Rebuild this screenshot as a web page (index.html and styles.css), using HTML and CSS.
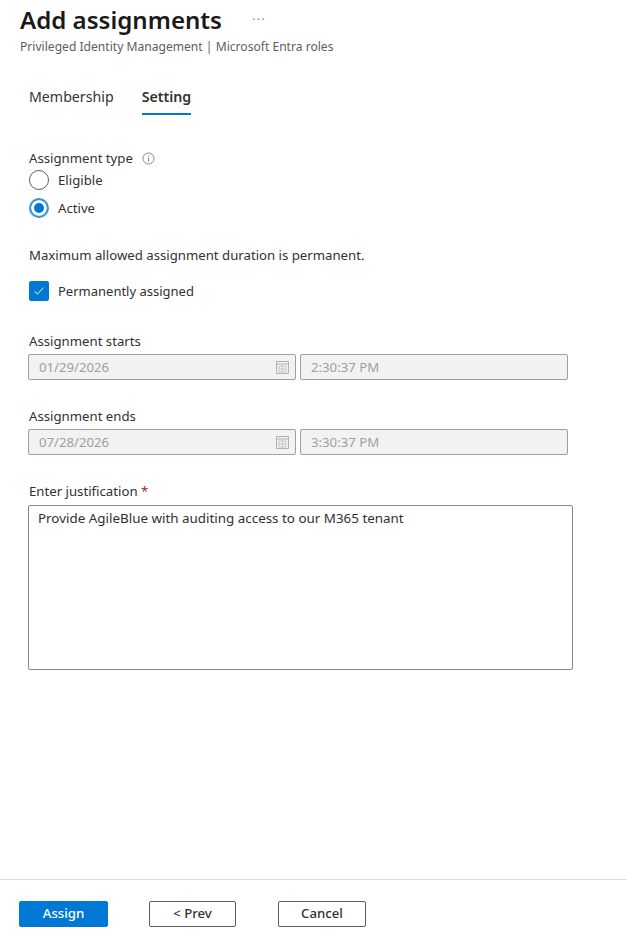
FILE: index.html
```html
<!DOCTYPE html>
<html lang="en">
<head>
<meta charset="utf-8">
<title>Add assignments</title>
<link rel="stylesheet" href="styles.css">
</head>
<body>
<div class="page">
  <header class="header">
    <div class="title-row">
      <h1 class="title">Add assignments</h1>
      <span class="more">···</span>
    </div>
    <div class="subtitle">Privileged Identity Management | Microsoft Entra roles</div>
  </header>
  <main class="content">
    <nav class="tabs">
      <span class="tab">Membership</span>
      <span class="tab tab-active">Setting</span>
    </nav>
    <div class="label-row">
      <span>Assignment type</span>
      <svg class="info" width="13" height="13" viewBox="0 0 13 13"><circle cx="6.5" cy="6.5" r="5.5" fill="none" stroke="#8a8886"/><rect x="6" y="5.5" width="1" height="4" fill="#8a8886"/><rect x="6" y="3.4" width="1" height="1.1" fill="#8a8886"/></svg>
    </div>
    <div class="radio-row"><span class="radio"></span><span>Eligible</span></div>
    <div class="radio-row"><span class="radio radio-on"></span><span>Active</span></div>
    <p class="note">Maximum allowed assignment duration is permanent.</p>
    <div class="check-row">
      <span class="check"><svg width="12" height="10" viewBox="0 0 12 10"><path d="M1.5 5.2 4.4 8 10.5 1.6" fill="none" stroke="#fff" stroke-width="1"/></svg></span>
      <span>Permanently assigned</span>
    </div>
    <div class="field field-starts">
      <div class="field-label">Assignment starts</div>
      <div class="date-row">
        <div class="input input-date"><span>01/29/2026</span>
          <svg width="13" height="14" viewBox="0 0 13 14"><path d="M.5 1.5h12v12H.5z M.5 4h12" fill="none" stroke="#b3b0ad"/><path d="M3 6h7v6H3z M6.5 6v6 M3 9h7" fill="none" stroke="#c8c6c4"/></svg>
        </div>
        <div class="input input-time"><span>2:30:37 PM</span></div>
      </div>
    </div>
    <div class="field field-ends">
      <div class="field-label">Assignment ends</div>
      <div class="date-row">
        <div class="input input-date"><span>07/28/2026</span>
          <svg width="13" height="14" viewBox="0 0 13 14"><path d="M.5 1.5h12v12H.5z M.5 4h12" fill="none" stroke="#b3b0ad"/><path d="M3 6h7v6H3z M6.5 6v6 M3 9h7" fill="none" stroke="#c8c6c4"/></svg>
        </div>
        <div class="input input-time"><span>3:30:37 PM</span></div>
      </div>
    </div>
    <div class="field field-just">
      <div class="field-label">Enter justification <span class="req">*</span></div>
      <div class="textarea">Provide AgileBlue with auditing access to our M365 tenant</div>
    </div>
  </main>
  <footer class="footer">
    <button class="btn btn-primary">Assign</button>
    <button class="btn btn-prev">&lt; Prev</button>
    <button class="btn btn-cancel">Cancel</button>
  </footer>
</div>
</body>
</html>
```
FILE: styles.css
```css
* { box-sizing: border-box; }
html, body { margin: 0; height: 100%; background: #fff; }
body { font-family: "Noto Sans", "Open Sans", sans-serif; font-size: 13.2px; color: #323130; }
.page { height: 936px; display: flex; flex-direction: column; overflow: hidden; }
.header { padding: 3px 0 0 20px; }
.title-row { display: flex; align-items: center; height: 33px; }
.title { margin: 0; font-size: 24.1px; font-weight: 600; color: #1b1a19; line-height: 33px; }
.more { margin-left: 30px; font-size: 12px; letter-spacing: 1.5px; color: #8a8886; line-height: 1; }
.subtitle { font-size: 12.1px; color: #605e5c; line-height: 16px; margin-top: 3px; }
.content { flex: 1; padding: 0 0 0 28px; }
.tabs { display: flex; gap: 28px; margin: 30px 0 0 1px; height: 30px; }
.tab { font-size: 14.2px; line-height: 24px; color: #323130; height: 30px; }
.tab-active { font-weight: 600; border-bottom: 2px solid #0078d4; }
.label-row { display: flex; align-items: center; gap: 9px; margin: 33px 0 0 1px; height: 20px; }
.radio-row { display: flex; align-items: center; gap: 9px; height: 20px; margin: 2px 0 0 1px; }
.radio-row + .radio-row { margin-top: 8px; }
.radio { width: 20px; height: 20px; border-radius: 50%; border: 1.5px solid #605e5c; background: #fff; flex: none; }
.radio-on { border: 2px solid #3d95dc; box-shadow: inset 0 0 0 3px #fff; background: #0078d4; }
.note { margin: 27px 0 0 1px; line-height: 20px; }
.check-row { display: flex; align-items: center; gap: 9px; margin: 16px 0 0 1px; height: 20px; font-size: 13px; }
.check { width: 20px; height: 20px; background: #0078d4; border-radius: 2px; display: flex; align-items: center; justify-content: center; flex: none; }
.field-label { line-height: 20px; margin-left: 1px; }
.field-starts { margin-top: 30px; }
.field-ends { margin-top: 26px; }
.field-just { margin-top: 26px; }
.date-row { display: flex; gap: 4px; margin-top: 3px; }
.input { height: 26px; background: #f3f2f1; border: 1px solid #a19f9d; border-radius: 2px; color: #a19f9d; display: flex; align-items: center; justify-content: space-between; padding: 0 10px; }
.input-date { width: 268px; padding-right: 6px; }
.input-time { width: 268px; }
.req { color: #a4262c; }
.textarea { width: 545px; height: 165px; margin-top: 4px; border: 1px solid #8a8886; border-radius: 2px; padding: 2px 9px; line-height: 20px; font-size: 13.4px; }
.footer { height: 57px; border-top: 1px solid #e1dfdd; display: flex; align-items: flex-start; padding: 21px 0 0 19px; }
.btn { height: 26px; font: 500 13.2px/22px "Noto Sans", "Open Sans", sans-serif; border-radius: 2px; border: 1px solid #605e5c; background: #fff; color: #323130; padding: 0 0 2px; }
.btn-primary { width: 89px; background: #0078d4; border-color: #0078d4; color: #fff; }
.btn-prev { width: 87px; margin-left: 41px; }
.btn-cancel { width: 88px; margin-left: 42px; }
```
